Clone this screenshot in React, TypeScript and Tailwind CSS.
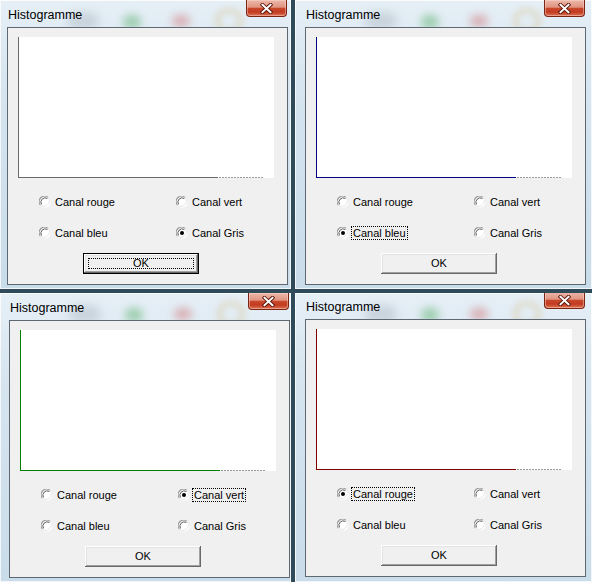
import { type ReactNode } from "react";

type Channel = "rouge" | "vert" | "bleu" | "gris";

type DialogSpec = {
  key: string;
  checked: Channel;
  focus: Channel | "ok";
  cell: string;
  titleBar: string;
  axisLine: string;
  axisLeft: string;
};

const dialogs: DialogSpec[] = [
  {
    key: "tl",
    checked: "gris",
    focus: "ok",
    cell: "pl-[7px] border-r-2 border-b-2",
    titleBar: "h-[27px]",
    axisLine: "bg-[#6a6a6a]",
    axisLeft: "border-[#6a6a6a]",
  },
  {
    key: "tr",
    checked: "bleu",
    focus: "bleu",
    cell: "pl-[10px] border-l-2 border-b-2",
    titleBar: "h-[27px]",
    axisLine: "bg-[#000080]",
    axisLeft: "border-[#000080]",
  },
  {
    key: "bl",
    checked: "vert",
    focus: "vert",
    cell: "pl-[9px] border-t-2 border-r-2",
    titleBar: "h-[27px]",
    axisLine: "bg-[#008000]",
    axisLeft: "border-[#008000]",
  },
  {
    key: "br",
    checked: "rouge",
    focus: "rouge",
    cell: "pl-[10px] border-t-2 border-l-2",
    titleBar: "h-[26px]",
    axisLine: "bg-[#800000]",
    axisLeft: "border-[#800000]",
  },
];

function RadioDot({ checked }: { checked: boolean }) {
  return (
    <svg width="12" height="12" viewBox="0 0 12 12" className="shrink-0">
      <circle cx="6" cy="6" r="5.5" fill="#ffffff" />
      <path d="M1.4 9 A5.4 5.4 0 0 1 9 1.4" fill="none" stroke="#9a9a9a" strokeWidth="1.2" />
      <path d="M2.5 8.4 A4.3 4.3 0 0 1 8.4 2.5" fill="none" stroke="#5a5a5a" strokeWidth="1" />
      <path d="M9 1.4 A5.4 5.4 0 0 1 1.4 9" fill="none" stroke="#e6e6e6" strokeWidth="1" />
      {checked && <circle cx="6" cy="6" r="2" fill="#000000" />}
    </svg>
  );
}

function Radio({ label, checked, focused }: { label: string; checked: boolean; focused: boolean }) {
  return (
    <div className="flex h-[20px] items-center">
      <RadioDot checked={checked} />
      <span
        className={`ml-[2px] border px-[1px] leading-[12px] ${
          focused ? "border-dotted border-black" : "border-transparent"
        }`}
      >
        {label}
      </span>
    </div>
  );
}

function CloseButton() {
  return (
    <div className="mb-[10px] mr-[1px] flex h-[17px] w-[41px] items-center justify-center rounded-b-[4px] border border-t-0 border-[#7a2414] bg-[linear-gradient(180deg,#edb9ab_0%,#e09480_45%,#c9482c_52%,#c23b20_75%,#dd7556_100%)] shadow-[inset_0_0_0_1px_rgba(255,220,210,0.45)]">
      <svg width="13" height="11" viewBox="0 0 13 11">
        <path d="M2.5 1.8 L10.5 9.2 M10.5 1.8 L2.5 9.2" stroke="#5a150a" strokeWidth="3.8" strokeLinecap="square" />
        <path d="M2.5 1.8 L10.5 9.2 M10.5 1.8 L2.5 9.2" stroke="#ffffff" strokeWidth="2" strokeLinecap="square" />
      </svg>
    </div>
  );
}

function GlassBlobs() {
  return (
    <>
      <div className="absolute left-[60px] top-[12px] h-[18px] w-[32px] rounded-full bg-[#8f9aa3] opacity-30 blur-[5px]" />
      <div className="absolute left-[116px] top-[15px] h-[14px] w-[18px] rounded-full bg-[#35a045] opacity-40 blur-[4px]" />
      <div className="absolute left-[165px] top-[15px] h-[12px] w-[18px] rounded-full bg-[#c84040] opacity-35 blur-[4px]" />
      <div className="absolute left-[208px] top-[8px] h-[26px] w-[28px] rounded-full border-[5px] border-[#d9c89a] opacity-50 blur-[3px]" />
    </>
  );
}

function Graph({ spec }: { spec: DialogSpec }) {
  return (
    <div className={`flex h-[141px] w-[256px] flex-col justify-end border-l bg-white ${spec.axisLeft}`}>
      <div className="flex h-px">
        <div className={`w-[199px] ${spec.axisLine}`} />
        <div className="w-[46px] bg-[repeating-linear-gradient(90deg,#ffffff_0_1px,#9a9a9a_1px_3px)]" />
      </div>
    </div>
  );
}

function OkButton({ focused }: { focused: boolean }): ReactNode {
  return (
    <div
      className={`ml-[65px] mt-[10px] flex h-[21px] w-[116px] bg-[#f0f0f0] p-[4px] ${
        focused
          ? "border border-black shadow-[inset_-1px_-1px_#696969,inset_1px_1px_#ffffff,inset_-2px_-2px_#a0a0a0,inset_2px_2px_#e3e3e3]"
          : "shadow-[inset_-1px_-1px_#696969,inset_1px_1px_#ffffff,inset_-2px_-2px_#a0a0a0,inset_2px_2px_#e3e3e3]"
      }`}
    >
      <span
        className={`flex flex-1 items-center justify-center border leading-none ${
          focused ? "border-dotted border-black" : "border-transparent"
        }`}
      >
        OK
      </span>
    </div>
  );
}

function Dialog({ spec }: { spec: DialogSpec }) {
  const radios: Array<[Channel, string]> = [
    ["rouge", "Canal rouge"],
    ["vert", "Canal vert"],
    ["bleu", "Canal bleu"],
    ["gris", "Canal Gris"],
  ];

  return (
    <div
      className={`h-full overflow-hidden border-[#2f4a58] bg-[linear-gradient(180deg,#e6eff6_0%,#d6e5f0_30%,#c9dce9_100%)] shadow-[inset_0_0_0_1px_rgba(255,255,255,0.75)] ${spec.cell}`}
    >
      <div className="flex w-[281px] flex-col">
        <div className={`relative flex items-end justify-between overflow-hidden ${spec.titleBar}`}>
          <GlassBlobs />
          <span className="relative mb-[4px] ml-[1px] text-[12.5px] leading-[16px] text-black">
            Histogramme
          </span>
          <div className="relative">
            <CloseButton />
          </div>
        </div>
        <div className="h-[258px] w-[281px] border border-[#5d6873] bg-[#f0f0f0] pl-[10px] pt-[9px] text-[11px] text-black">
          <Graph spec={spec} />
          <div className="ml-[21px] mt-[14px] grid grid-cols-[137px_auto] gap-y-[11px]">
            {radios.map(([id, label]) => (
              <Radio key={id} label={label} checked={spec.checked === id} focused={spec.focus === id} />
            ))}
          </div>
          <OkButton focused={spec.focus === "ok"} />
        </div>
      </div>
    </div>
  );
}

export default function App() {
  return (
    <div
      className="grid h-[582px] w-[592px] grid-cols-[293px_299px] grid-rows-[291px_291px] overflow-hidden bg-[#2f4a58]"
      style={{ fontFamily: '"Liberation Sans", Arial, sans-serif' }}
    >
      {dialogs.map((spec) => (
        <Dialog key={spec.key} spec={spec} />
      ))}
    </div>
  );
}
